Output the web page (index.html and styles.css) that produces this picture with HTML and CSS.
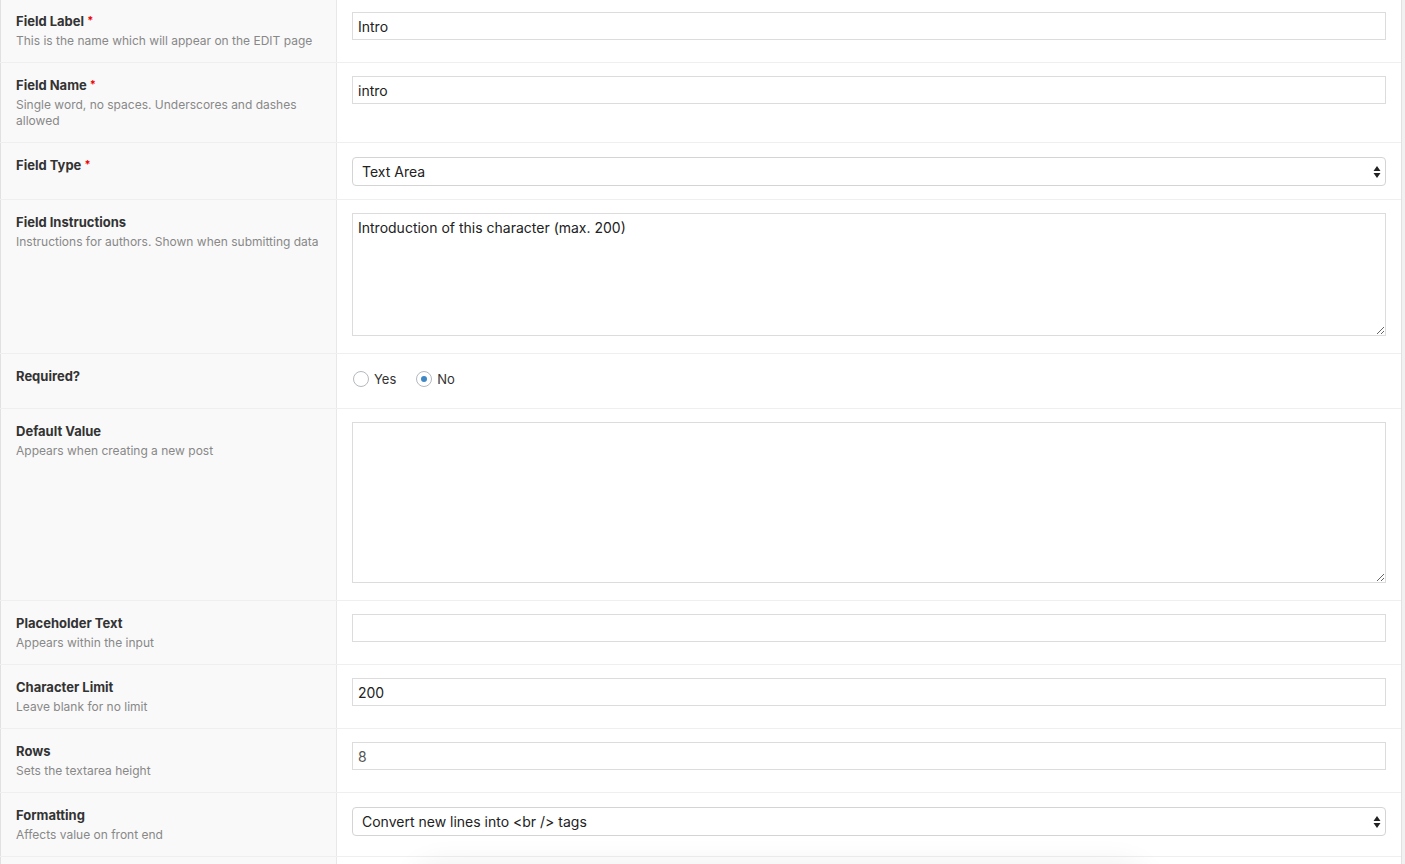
FILE: index.html
```html
<!DOCTYPE html>
<html lang="en">
<head>
<meta charset="utf-8">
<title>Field settings</title>
<link rel="stylesheet" href="styles.css">
</head>
<body>
<div class="table">
  <div class="row">
    <div class="label"><div class="name">Field Label <span class="req">*</span></div><p class="desc">This is the name which will appear on the EDIT page</p></div>
    <div class="input"><input class="text" type="text" value="Intro"></div>
  </div>
  <div class="row">
    <div class="label"><div class="name">Field Name <span class="req">*</span></div><p class="desc">Single word, no spaces. Underscores and dashes allowed</p></div>
    <div class="input"><input class="text" type="text" value="intro"></div>
  </div>
  <div class="row">
    <div class="label"><div class="name">Field Type <span class="req">*</span></div></div>
    <div class="input">
      <div class="select-wrap">
        <select class="select"><option>Text Area</option></select>
        <svg class="arrows" width="8" height="14" viewBox="0 0 8 14"><path d="M4 1 L7.5 6 L0.5 6 Z M4 13 L7.5 8 L0.5 8 Z" fill="#222"/></svg>
      </div>
    </div>
  </div>
  <div class="row">
    <div class="label"><div class="name">Field Instructions</div><p class="desc">Instructions for authors. Shown when submitting data</p></div>
    <div class="input"><textarea class="area area-short">Introduction of this character (max. 200)</textarea></div>
  </div>
  <div class="row">
    <div class="label"><div class="name">Required?</div></div>
    <div class="input radios">
      <label class="radio"><span class="dot"></span>Yes</label>
      <label class="radio"><span class="dot checked"></span>No</label>
    </div>
  </div>
  <div class="row">
    <div class="label"><div class="name">Default Value</div><p class="desc">Appears when creating a new post</p></div>
    <div class="input"><textarea class="area area-tall"></textarea></div>
  </div>
  <div class="row">
    <div class="label"><div class="name">Placeholder Text</div><p class="desc">Appears within the input</p></div>
    <div class="input"><input class="text" type="text" value=""></div>
  </div>
  <div class="row">
    <div class="label"><div class="name">Character Limit</div><p class="desc">Leave blank for no limit</p></div>
    <div class="input"><input class="text" type="text" value="200"></div>
  </div>
  <div class="row">
    <div class="label"><div class="name">Rows</div><p class="desc">Sets the textarea height</p></div>
    <div class="input"><input class="text muted" type="text" value="8"></div>
  </div>
  <div class="row">
    <div class="label"><div class="name">Formatting</div><p class="desc">Affects value on front end</p></div>
    <div class="input">
      <div class="select-wrap">
        <select class="select"><option>Convert new lines into &lt;br /&gt; tags</option></select>
        <svg class="arrows" width="8" height="14" viewBox="0 0 8 14"><path d="M4 1 L7.5 6 L0.5 6 Z M4 13 L7.5 8 L0.5 8 Z" fill="#222"/></svg>
      </div>
    </div>
  </div>
  <div class="row row-empty">
    <div class="label"></div>
    <div class="input"></div>
  </div>
</div>
<div class="shadow"></div>
</body>
</html>
```
FILE: styles.css
```css
html, body {
  margin: 0;
  padding: 0;
  height: 100%;
  overflow: hidden;
}
body {
  background: #f1f1f1;
  font-family: Inter, "Open Sans", "Liberation Sans", sans-serif;
  color: #333;
  position: relative;
}
.table {
  width: 1401px;
  background: #fff;
  border-right: 1px solid #e1e1e1;
}
.row {
  display: grid;
  grid-template-columns: 337px 1fr;
  border-top: 1px solid #efefef;
}
.row:first-child {
  border-top: 0;
}
.row:first-child .label {
  padding-top: 11px;
}
.row:first-child .input {
  padding-top: 12px;
}
.row-empty {
  height: 40px;
}
.label {
  background: #f9f9f9;
  border-left: 1px solid #e1e1e1;
  border-right: 1px solid #e8e8e8;
  padding: 12px 15px 13px 15px;
}
.name {
  font-size: 13px;
  font-weight: 700;
  line-height: 20px;
  color: #333;
}
.req {
  color: #e00;
  font-size: 11px;
  vertical-align: top;
  position: relative;
  top: -1px;
}
.desc {
  margin: 2px 0 0;
  font-size: 12px;
  line-height: 16px;
  color: #888;
}
.input {
  padding: 13px 15px;
}
.text {
  display: block;
  box-sizing: border-box;
  width: 100%;
  height: 28px;
  margin: 0;
  padding: 0 5px;
  border: 1px solid #dcdcdc;
  border-radius: 0;
  background: #fff;
  font-family: inherit;
  font-size: 14px;
  color: #222;
  outline: none;
}
.text.muted { color: #555; }
.select-wrap {
  position: relative;
  margin-top: 1px;
}
.select {
  display: block;
  box-sizing: border-box;
  width: 100%;
  height: 29px;
  margin: 0;
  padding: 0 9px;
  -webkit-appearance: none;
  appearance: none;
  border: 1px solid #d4d4d4;
  border-radius: 4px;
  background: #fff;
  font-family: inherit;
  font-size: 14px;
  color: #222;
  outline: none;
}
.arrows {
  position: absolute;
  right: 5px;
  top: 8px;
}
.area {
  display: block;
  box-sizing: border-box;
  width: 100%;
  margin: 0 0 4px;
  padding: 4px 5px;
  border: 1px solid #dcdcdc;
  border-radius: 0;
  font-family: inherit;
  font-size: 14px;
  line-height: 19px;
  color: #222;
  outline: none;
  resize: vertical;
}
.area-short { height: 123px; }
.area-tall { height: 161px; }
.radios {
  display: flex;
  align-items: center;
  gap: 20px;
  padding: 15px 16px 19px;
  height: 20px;
}
.radio {
  display: flex;
  align-items: center;
  gap: 5px;
  font-size: 13px;
  color: #333;
}
.dot {
  box-sizing: border-box;
  width: 16px;
  height: 16px;
  border-radius: 50%;
  border: 1px solid #b4b9be;
  background: #fff;
  display: flex;
  align-items: center;
  justify-content: center;
}
.dot.checked::after {
  content: "";
  width: 6px;
  height: 6px;
  border-radius: 50%;
  background: #3f88c5;
}
.shadow {
  position: absolute;
  left: 420px;
  top: 872px;
  width: 720px;
  height: 40px;
  border-radius: 40px;
  box-shadow: 0 0 30px 8px rgba(0, 0, 0, 0.07);
}
```
